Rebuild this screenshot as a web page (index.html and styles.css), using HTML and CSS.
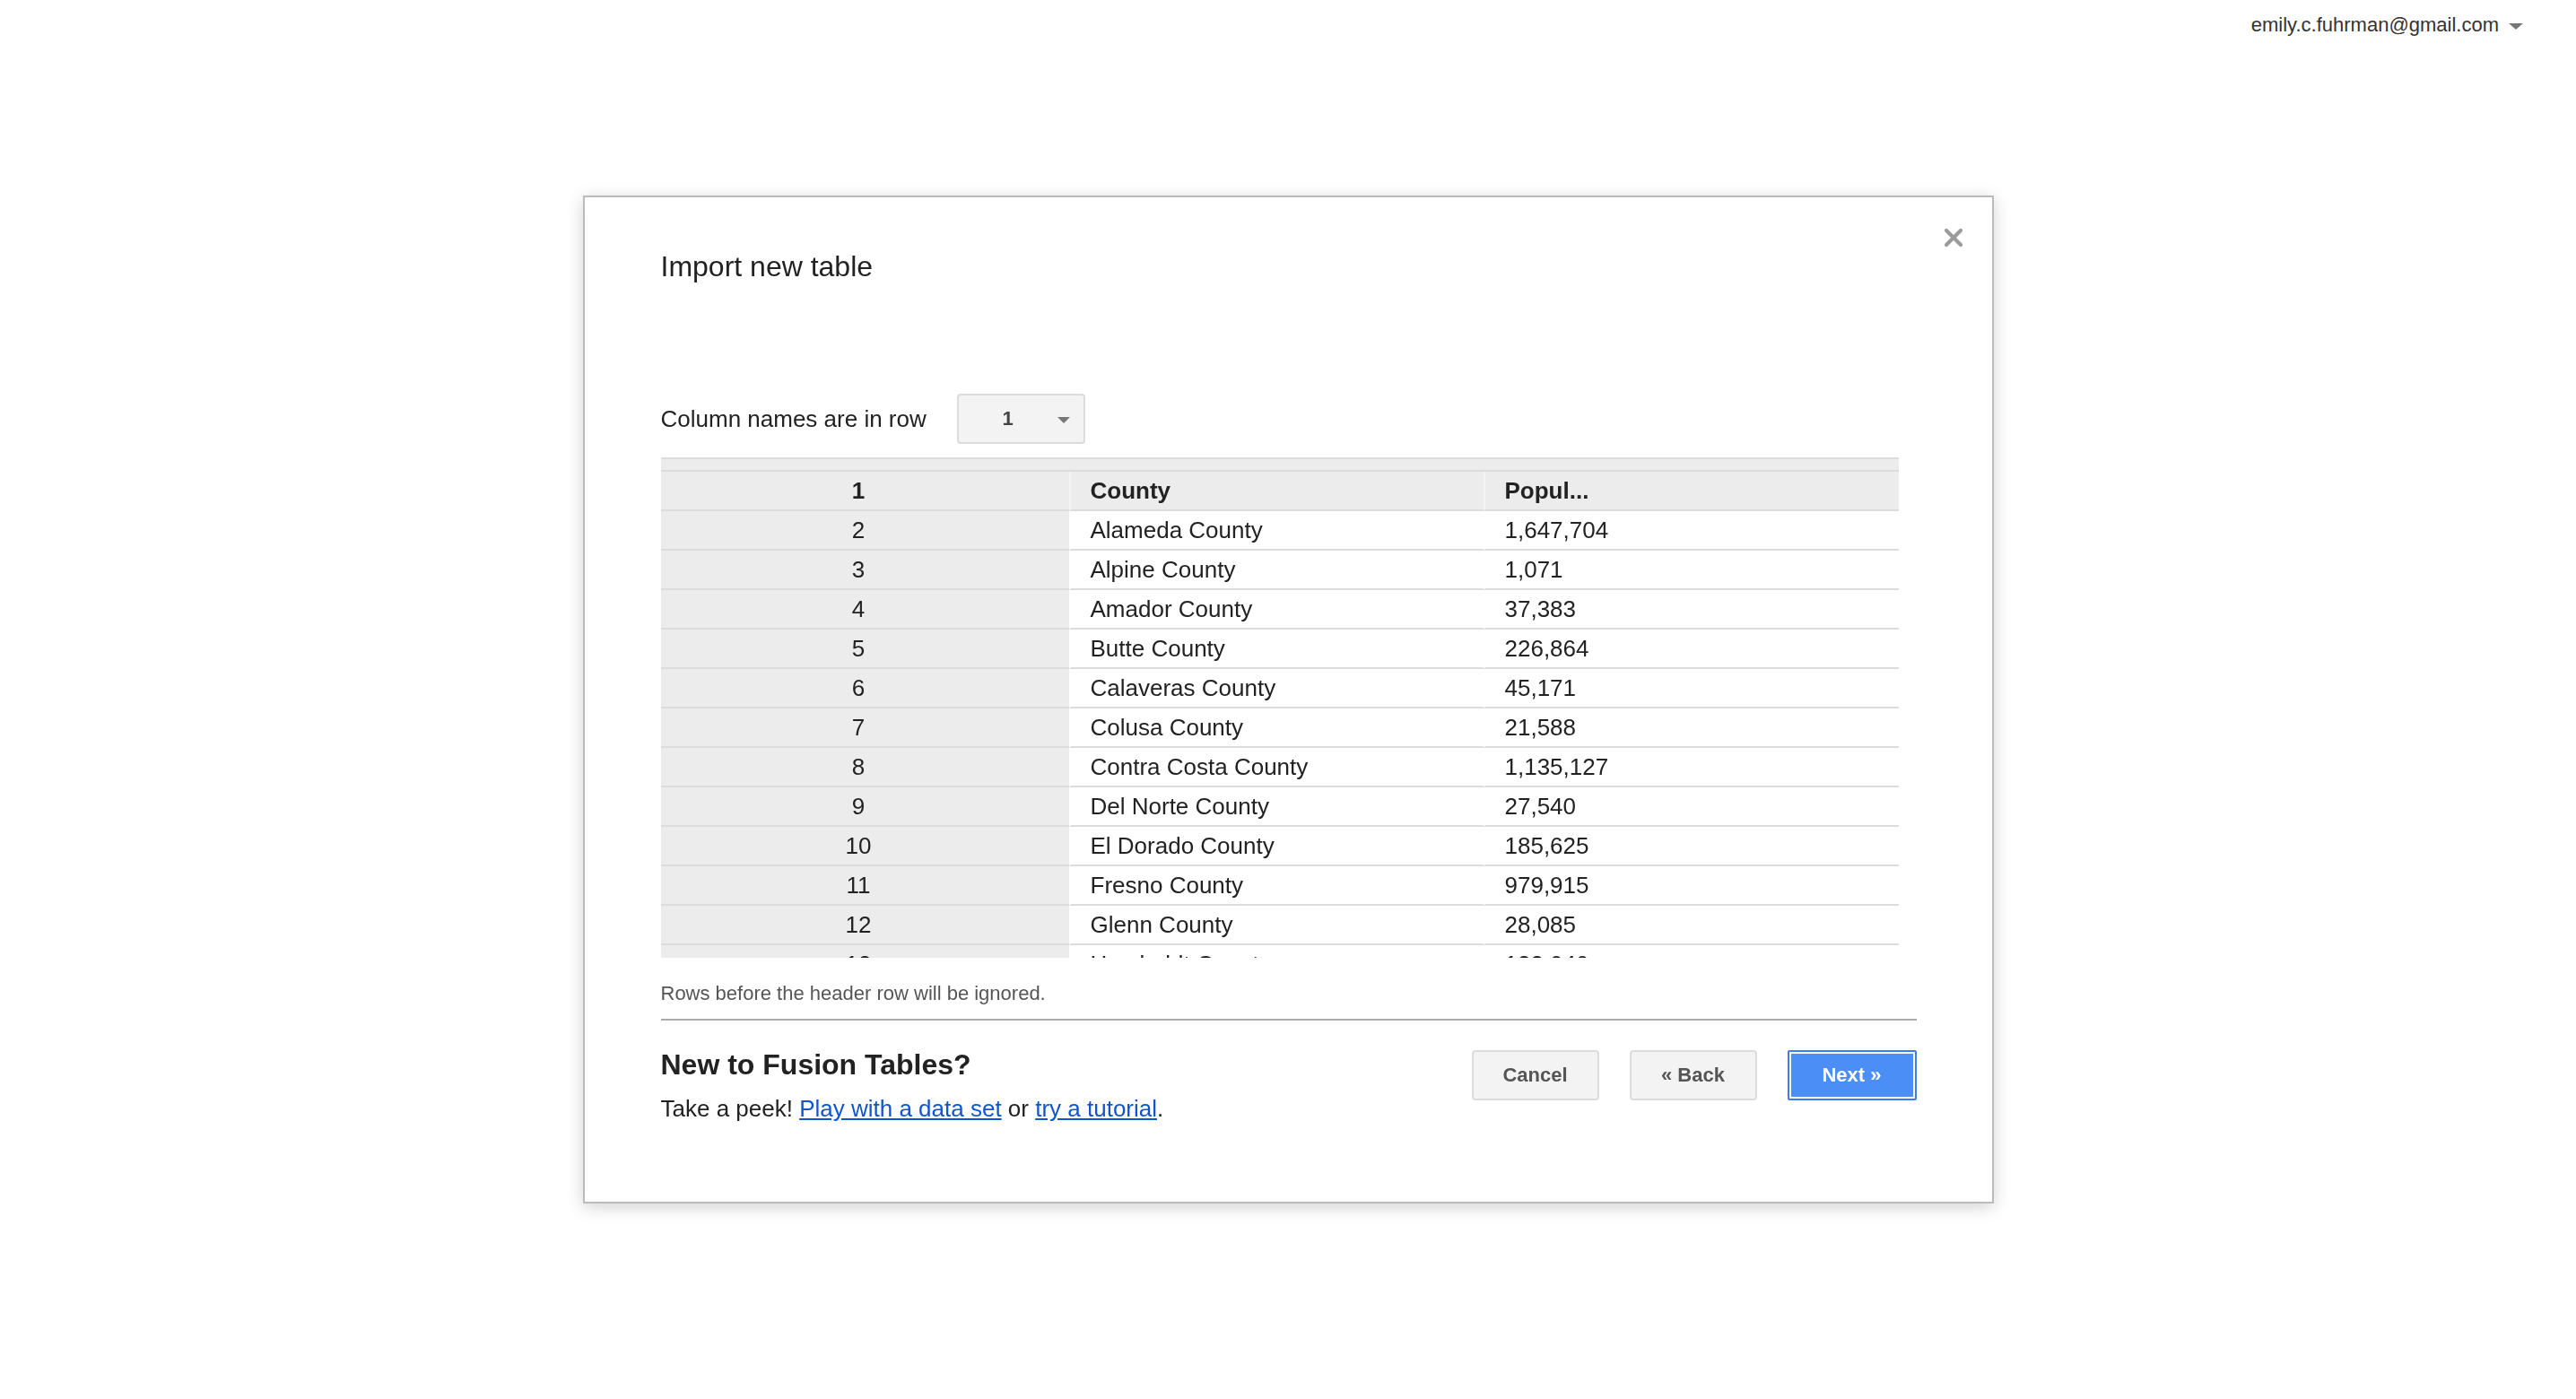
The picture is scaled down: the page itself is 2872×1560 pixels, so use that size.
FILE: index.html
```html
<!DOCTYPE html>
<html lang="en">
<head>
<meta charset="utf-8">
<title>Import new table</title>
<link rel="stylesheet" href="styles.css">
</head>
<body>
<header class="topbar">
  <div class="account"><span class="account-email">emily.c.fuhrman@gmail.com</span><span class="caret"></span></div>
</header>

<div class="overlay">
  <div class="dialog">
    <button class="close" aria-label="Close">
      <svg viewBox="0 0 22 22" width="22" height="22"><path d="M3 3 L19 19 M19 3 L3 19" stroke="#9b9b9b" stroke-width="4.2" stroke-linecap="round"/></svg>
    </button>
    <h1 class="title">Import new table</h1>

    <div class="header-select">
      <span class="header-select-label">Column names are in row</span>
      <div class="select"><span class="select-value">1</span><span class="select-caret"></span></div>
    </div>

    <div class="preview">
      <div class="preview-strip"></div>
      <table class="grid">
        <colgroup><col class="c1"><col class="c2"><col class="c3"></colgroup>
        <tbody>
          <tr class="head"><td>1</td><td>County</td><td>Popul...</td></tr>
          <tr><td>2</td><td>Alameda County</td><td>1,647,704</td></tr>
          <tr><td>3</td><td>Alpine County</td><td>1,071</td></tr>
          <tr><td>4</td><td>Amador County</td><td>37,383</td></tr>
          <tr><td>5</td><td>Butte County</td><td>226,864</td></tr>
          <tr><td>6</td><td>Calaveras County</td><td>45,171</td></tr>
          <tr><td>7</td><td>Colusa County</td><td>21,588</td></tr>
          <tr><td>8</td><td>Contra Costa County</td><td>1,135,127</td></tr>
          <tr><td>9</td><td>Del Norte County</td><td>27,540</td></tr>
          <tr><td>10</td><td>El Dorado County</td><td>185,625</td></tr>
          <tr><td>11</td><td>Fresno County</td><td>979,915</td></tr>
          <tr><td>12</td><td>Glenn County</td><td>28,085</td></tr>
          <tr><td>13</td><td>Humboldt County</td><td>133,040</td></tr>
        </tbody>
      </table>
    </div>

    <p class="hint">Rows before the header row will be ignored.</p>
    <hr class="divider">

    <div class="footer">
      <div class="promo">
        <h2 class="promo-title">New to Fusion Tables?</h2>
        <p class="promo-text">Take a peek! <a href="#">Play with a data set</a> or <a href="#">try a tutorial</a>.</p>
      </div>
      <div class="buttons">
        <button class="btn">Cancel</button>
        <button class="btn">« Back</button>
        <button class="btn btn-primary">Next »</button>
      </div>
    </div>
  </div>
</div>
</body>
</html>
```

FILE: styles.css
```css
html, body {
  margin: 0;
  padding: 0;
  background: #fff;
}

body {
  font-family: "Liberation Sans", Arial, Helvetica, sans-serif;
  color: #222;
  height: 100vh;
  overflow: hidden;
}

.topbar {
  height: 56px;
  display: flex;
  justify-content: flex-end;
  align-items: center;
  padding-right: 59px;
}

.account {
  display: flex;
  align-items: center;
  font-size: 22px;
  color: #333;
}

.caret {
  margin-left: 11px;
  margin-top: 3px;
  width: 0;
  height: 0;
  border-left: 8px solid transparent;
  border-right: 8px solid transparent;
  border-top: 7px solid #777;
}

.overlay {
  position: fixed;
  inset: 0;
  display: flex;
  align-items: center;
  justify-content: center;
}

.dialog {
  position: relative;
  box-sizing: border-box;
  width: 1573px;
  border: 2px solid #bbb;
  background: #fff;
  box-shadow: 0 4px 18px rgba(0, 0, 0, 0.18);
  padding: 57px 84px 89px 85px;
}

.close {
  position: absolute;
  top: 34px;
  right: 32px;
  width: 22px;
  height: 22px;
  padding: 0;
  border: 0;
  background: none;
  display: block;
}

.close svg {
  display: block;
}

.title {
  margin: 0;
  font-size: 32px;
  line-height: 40px;
  font-weight: normal;
  color: #222;
}

.header-select {
  margin-top: 122px;
  display: flex;
  align-items: center;
  height: 56px;
}

.header-select-label {
  font-size: 26px;
  color: #222;
}

.select {
  margin-left: 34px;
  box-sizing: border-box;
  width: 143px;
  height: 56px;
  border: 2px solid #dcdcdc;
  border-radius: 4px;
  background: #f3f3f3;
  display: flex;
  align-items: center;
  padding-right: 15px;
}

.select-value {
  flex: 1;
  text-align: center;
  font-size: 22px;
  font-weight: bold;
  color: #444;
}

.select-caret {
  width: 0;
  height: 0;
  border-left: 7px solid transparent;
  border-right: 7px solid transparent;
  border-top: 7px solid #777;
  margin-top: 2px;
}

.preview {
  margin-top: 15px;
  width: 1380px;
  height: 558px;
  overflow: hidden;
}

.preview-strip {
  height: 12px;
  background: #ececec;
  border-top: 2px solid #dcdcdc;
  border-bottom: 2px solid #dcdcdc;
}

.grid {
  width: 1380px;
  table-layout: fixed;
  border-collapse: separate;
  border-spacing: 0;
  font-size: 26px;
  color: #222;
}

.grid .c1 { width: 455px; }
.grid .c2 { width: 462px; }
.grid .c3 { width: 463px; }

.grid td {
  height: 42px;
  padding: 0 22px;
  border-bottom: 2px solid #dcdcdc;
  white-space: nowrap;
  overflow: hidden;
  vertical-align: middle;
  line-height: 42px;
}

.grid td + td {
  border-left: 2px solid #fff;
}

.grid td:first-child {
  background: #ececec;
  text-align: center;
  padding: 0 36px 0 22px;
}

.grid tr.head td {
  background: #ececec;
  font-weight: bold;
}

.grid tr.head td + td {
  border-left-color: #f4f4f4;
}

.hint {
  margin: 27px 0 0;
  font-size: 22px;
  line-height: 26px;
  color: #555;
}

.divider {
  margin: 15px 0 0;
  border: 0;
  border-top: 2px solid #aaa;
  height: 0;
}

.footer {
  display: flex;
  justify-content: space-between;
  align-items: flex-start;
  padding-top: 31px;
}

.promo-title {
  margin: 0;
  font-size: 32px;
  line-height: 36px;
  font-weight: bold;
  color: #222;
}

.promo-text {
  margin: 16px 0 0;
  font-size: 26px;
  line-height: 30px;
  color: #222;
}

.promo-text a {
  color: #1155cc;
  text-decoration: underline;
}

.buttons {
  display: flex;
  gap: 34px;
  margin-top: 2px;
}

.btn {
  box-sizing: border-box;
  width: 142px;
  height: 56px;
  border: 2px solid #dcdcdc;
  border-radius: 4px;
  background: #f3f3f3;
  font-family: "Liberation Sans", Arial, Helvetica, sans-serif;
  font-size: 22px;
  font-weight: bold;
  color: #555;
  padding: 0;
}

.btn-primary {
  width: 144px;
  border: 2px solid #3b7ee8;
  border-radius: 2px;
  background: #4b8ff6;
  color: #fff;
  box-shadow: inset 0 0 0 2px #fff;
}
```
